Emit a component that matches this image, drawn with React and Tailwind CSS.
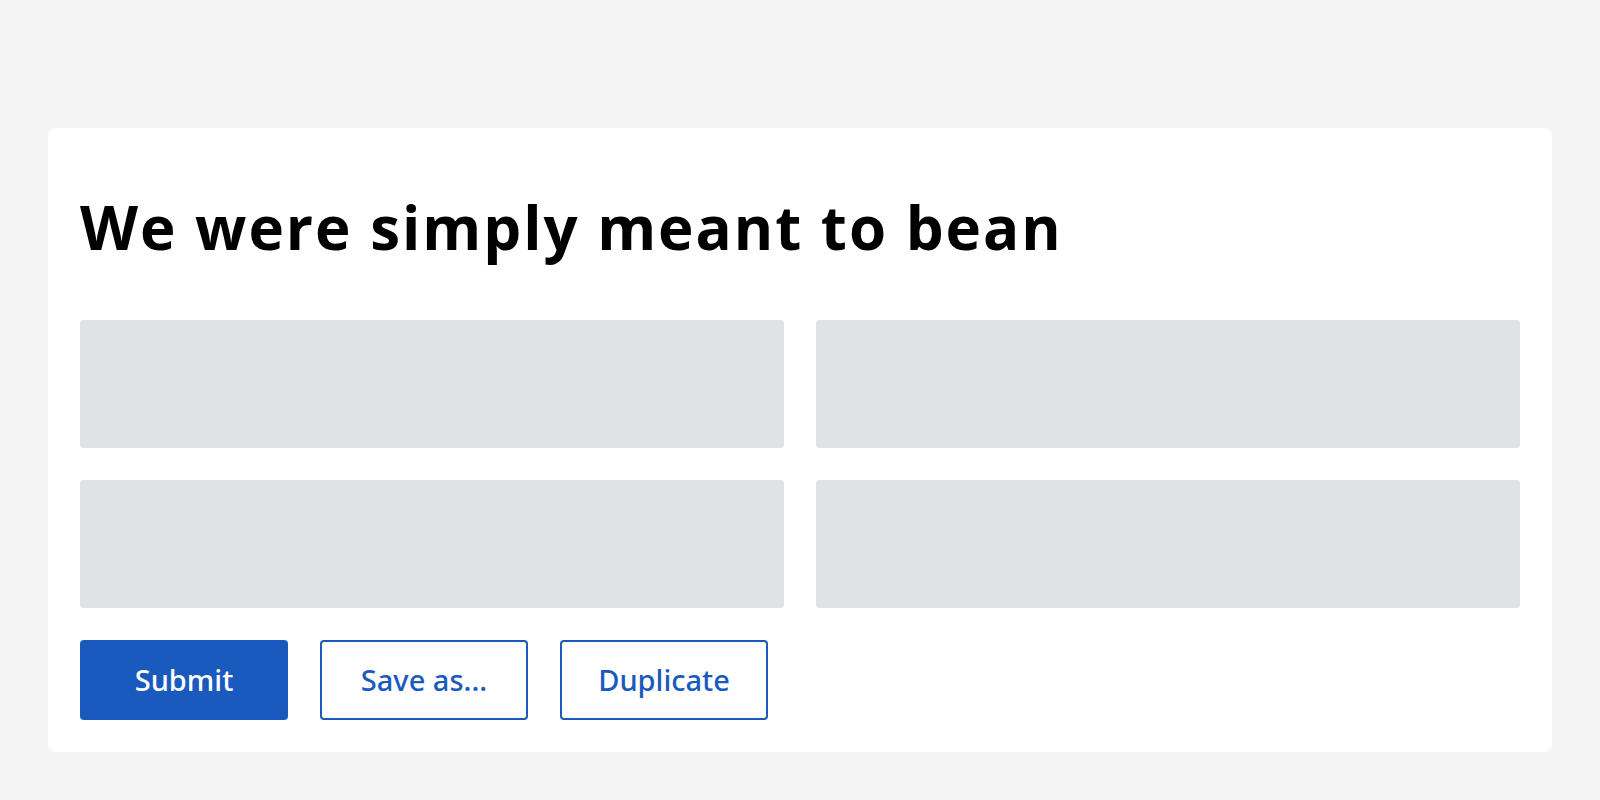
import React from 'react';

const fields = [1, 2, 3, 4];

export default function App() {
  return (
    <div className="min-h-screen bg-[#f4f4f4] pt-32 px-12">
      <div className="bg-white rounded-lg p-8">
        <h1
          className="mt-[31px] mb-[57px] text-[60px] leading-[72px] font-bold tracking-[2px] text-black"
          style={{ fontFamily: '"Open Sans", "Noto Sans", sans-serif' }}
        >
          We were simply meant to bean
        </h1>

        <div className="grid grid-cols-2 gap-8">
          {fields.map((f) => (
            <div key={f} className="h-32 rounded bg-[#e1e2e4]" />
          ))}
        </div>

        <div className="flex gap-8 mt-8" style={{ fontFamily: '"Noto Sans", "Open Sans", sans-serif' }}>
          <button className="w-[208px] h-20 rounded bg-[#1a5abf] text-white text-[29px] font-medium">
            Submit
          </button>
          <button className="w-[208px] h-20 rounded border-2 border-[#1a5abf] bg-white text-[#1a5abf] text-[29px] font-medium">
            Save as...
          </button>
          <button className="w-[208px] h-20 rounded border-2 border-[#1a5abf] bg-white text-[#1a5abf] text-[29px] font-medium">
            Duplicate
          </button>
        </div>
      </div>
    </div>
  );
}
